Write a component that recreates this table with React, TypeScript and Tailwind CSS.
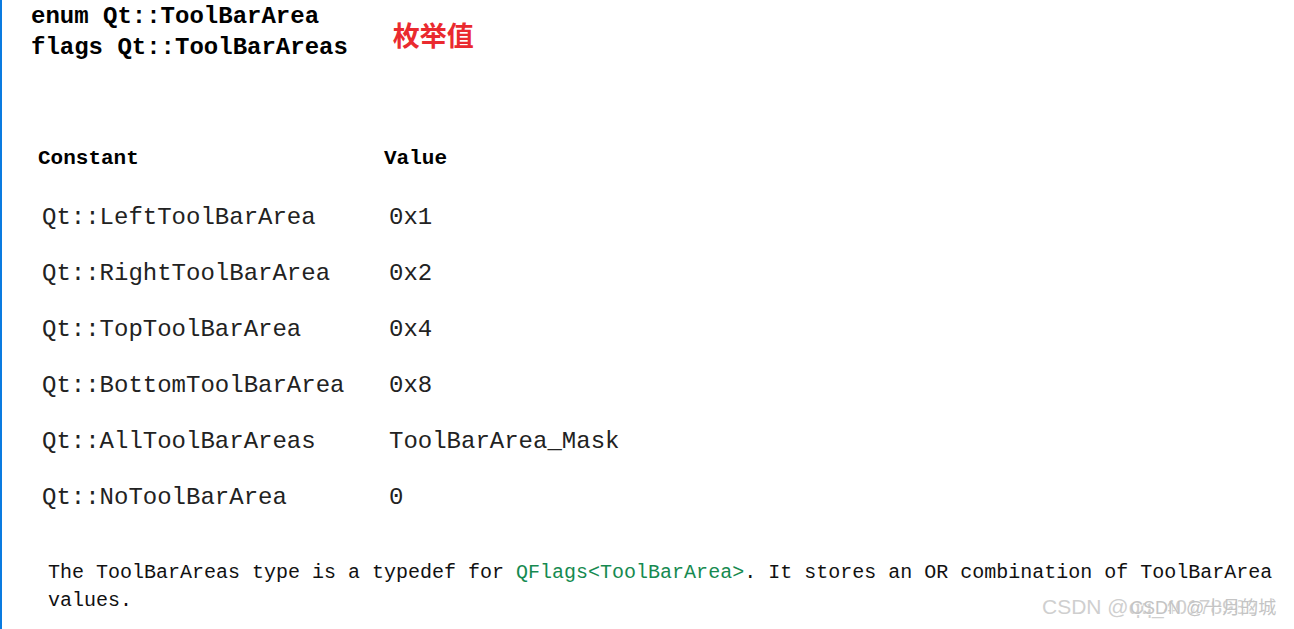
const rows: [string, string][] = [
  ["Qt::LeftToolBarArea", "0x1"],
  ["Qt::RightToolBarArea", "0x2"],
  ["Qt::TopToolBarArea", "0x4"],
  ["Qt::BottomToolBarArea", "0x8"],
  ["Qt::AllToolBarAreas", "ToolBarArea_Mask"],
  ["Qt::NoToolBarArea", "0"],
];

const mono = "font-['Liberation_Mono','DejaVu_Sans_Mono',monospace]";

export default function App() {
  return (
    <div className="relative w-[1294px] h-[629px] overflow-hidden bg-white border-l-2 border-[#0a7be0] text-black">
      {/* 标题 */}
      <div className="flex items-start pl-[29px]">
        <div className={`${mono} font-bold text-[24px] leading-[31px] pt-[1px]`}>
          <div>enum Qt::ToolBarArea</div>
          <div>flags Qt::ToolBarAreas</div>
        </div>
        <div className="ml-[45px] mt-[19px] text-[27px] leading-[32px] font-bold text-[#ea2a2f] font-['Noto_Sans_CJK_SC',sans-serif]">
          枚举值
        </div>
      </div>

      {/* 表格 */}
      <div className={`${mono} mt-[68px] pl-[36px]`}>
        <div className="grid grid-cols-[346px_1fr] h-[56px] items-center font-bold text-[21px]">
          <div>Constant</div>
          <div>Value</div>
        </div>
        <div className="mt-[3px] text-[24px] text-[#222]">
          {rows.map(([name, value]) => (
            <div key={name} className="grid grid-cols-[346px_1fr] h-[56px] items-center">
              <div className="pl-[4px]">{name}</div>
              <div className="pl-[5px]">{value}</div>
            </div>
          ))}
        </div>
      </div>

      {/* 说明 */}
      <p className={`${mono} mt-[33px] pl-[46px] pr-[10px] text-[20px] leading-[28px] text-[#111]`}>
        The ToolBarAreas type is a typedef for{" "}
        <span className="text-[#168a50]">QFlags&lt;ToolBarArea&gt;</span>. It stores an OR combination of ToolBarArea
        values.
      </p>

      {/* 水印 */}
      <div className="absolute left-[1040px] top-[594px] text-[21px] leading-[26px] text-[#cfcfcf] font-['Liberation_Sans',sans-serif] [text-shadow:1px_1px_0_#fff]">
        CSDN @qq_40178982
      </div>
      <div className="absolute left-[1128px] top-[597px] text-[18px] leading-[22px] text-[#c4c4c4] font-['Liberation_Sans','Noto_Sans_CJK_SC',sans-serif] [text-shadow:1px_1px_0_#fff]">
        CSDN @十月的城
      </div>
    </div>
  );
}
